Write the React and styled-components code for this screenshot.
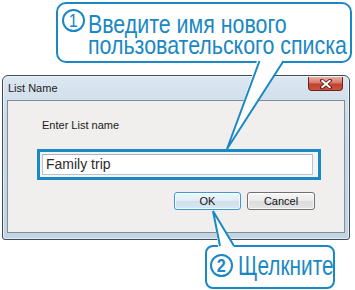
import React from 'react';
import styled, { createGlobalStyle } from 'styled-components';

const Global = createGlobalStyle`
  body {
    margin: 0;
    background: #fff;
    font-family: "Liberation Sans", Arial, sans-serif;
  }
`;

const blue = '#1a88c4';

const Page = styled.div`
  position: relative;
  width: 355px;
  height: 290px;
  box-sizing: border-box;
  padding: 75px 5px 0 2px;
  overflow: hidden;
`;

const Window = styled.div`
  height: 165px;
  box-sizing: border-box;
  display: flex;
  flex-direction: column;
  border: 1px solid #3d4b59;
  border-radius: 6px 6px 3px 3px;
  background: linear-gradient(180deg, #dbe7f1 0%, #c9d9e6 30%, #c3d4e2 100%);
  box-shadow: inset 0 0 0 1px rgba(255, 255, 255, 0.55);
`;

const TitleBar = styled.div`
  height: 24px;
  display: flex;
  align-items: flex-start;
  justify-content: space-between;
  padding: 0 6px 0 5px;
`;

const Title = styled.span`
  margin-top: 6px;
  font-size: 11px;
  color: #1b1b1b;
`;

const CloseButton = styled.div`
  width: 35px;
  height: 14px;
  margin-top: 1px;
  box-sizing: border-box;
  display: flex;
  align-items: center;
  justify-content: center;
  border: 1px solid #6a2219;
  border-top: none;
  border-radius: 0 0 4px 4px;
  background: linear-gradient(180deg, #e9b0a3 0%, #d8766a 45%, #c2412f 55%, #c7553f 100%);
`;

const Client = styled.div`
  flex: 1;
  margin: 0 4px 6px 4px;
  box-sizing: border-box;
  border: 1px solid #7e8d99;
  background: #f0efed;
  padding: 18px 23px 0 29px;
  display: flex;
  flex-direction: column;
`;

const Label = styled.div`
  margin-left: 5px;
  font-size: 11px;
  line-height: 13px;
  color: #1a1a1a;
`;

const Highlight = styled.div`
  margin-top: 17px;
  height: 31px;
  box-sizing: border-box;
  border: 3px solid ${blue};
  padding: 2px 5px 2px 2px;
  background: #f4f4f2;
`;

const TextBox = styled.div`
  height: 100%;
  box-sizing: border-box;
  border: 1px solid #b4c6d3;
  border-top-color: #a3b3c0;
  background: #fff;
  padding-left: 3px;
  font-size: 14px;
  line-height: 19px;
  color: #2c2c2c;
`;

const ButtonRow = styled.div`
  margin-top: 12px;
  padding-right: 6px;
  display: flex;
  justify-content: flex-end;
  gap: 6px;
`;

const Button = styled.div`
  width: ${(p) => p.$w}px;
  height: 18px;
  box-sizing: border-box;
  display: flex;
  align-items: center;
  justify-content: center;
  border: 1px solid ${(p) => (p.$default ? '#3c9bcd' : '#707070')};
  border-radius: 3px;
  background: ${(p) =>
    p.$default
      ? 'linear-gradient(180deg, #eef6fb 0%, #e1edf5 50%, #cfe0ec 51%, #d8e7f1 100%)'
      : 'linear-gradient(180deg, #f5f5f5 0%, #ebebeb 50%, #dcdcdc 51%, #e4e4e4 100%)'};
  box-shadow: inset 0 0 0 1px rgba(255, 255, 255, 0.8);
  font-size: 11px;
  color: #111;
`;

const Callout = styled.div`
  position: absolute;
  left: ${(p) => p.$x}px;
  top: ${(p) => p.$y}px;
  width: ${(p) => p.$w}px;
  height: ${(p) => p.$h}px;
  box-sizing: border-box;
  border: 2px solid ${blue};
  border-radius: ${(p) => p.$r}px;
  background: #fff;
  padding: ${(p) => p.$pad};
  display: flex;
  align-items: flex-start;
  gap: ${(p) => p.$gap}px;
  z-index: 2;
`;

const Circle = styled.div`
  flex: none;
  width: ${(p) => p.$size}px;
  height: ${(p) => p.$size}px;
  box-sizing: border-box;
  margin-top: ${(p) => p.$top}px;
  border: 2px solid ${blue};
  border-radius: 50%;
  display: flex;
  align-items: center;
  justify-content: center;
  font-size: 19px;
  font-weight: ${(p) => (p.$bold ? 700 : 400)};
  color: ${blue};
  line-height: 1;
`;

const Digit = styled.span`
  display: inline-block;
  transform: scaleX(0.85);
`;

const CalloutText = styled.div`
  flex: 1;
  min-width: 0;
  margin-top: ${(p) => p.$top}px;
  font-size: ${(p) => p.$size}px;
  line-height: ${(p) => p.$lh}px;
  color: ${blue};
  white-space: nowrap;
  transform: scaleX(${(p) => p.$sx});
  transform-origin: left top;
`;

const Tails = styled.svg`
  position: absolute;
  left: 0;
  top: 0;
  z-index: 3;
  pointer-events: none;
`;

export default function App() {
  return (
    <>
      <Global />
      <Page>
        <Window>
          <TitleBar>
            <Title>List Name</Title>
            <CloseButton>
              <svg width="12" height="10" viewBox="0 0 12 10">
                <path d="M2 1.5 L10 8.5 M10 1.5 L2 8.5" stroke="#5a1c14" strokeWidth="3.6" strokeLinecap="square" />
                <path d="M2.3 1.8 L9.7 8.2 M9.7 1.8 L2.3 8.2" stroke="#fff" strokeWidth="2" strokeLinecap="square" />
              </svg>
            </CloseButton>
          </TitleBar>
          <Client>
            <Label>Enter List name</Label>
            <Highlight>
              <TextBox>Family trip</TextBox>
            </Highlight>
            <ButtonRow>
              <Button $default $w={67}>OK</Button>
              <Button $w={68}>Cancel</Button>
            </ButtonRow>
          </Client>
        </Window>

        <Callout $x={56} $y={2} $w={296} $h={61} $r={10} $pad="5px 0 0 4px" $gap={3}>
          <Circle $size={23} $top={0}><Digit>1</Digit></Circle>
          <CalloutText $size={25} $lh={21} $top={5} $sx={0.855}>
            Введите имя нового
            <br />
            пользовательского списка
          </CalloutText>
        </Callout>

        <Callout $x={205} $y={245} $w={130} $h={44} $r={8} $pad="0 0 0 3px" $gap={5}>
          <Circle $size={23} $top={7} $bold><Digit>2</Digit></Circle>
          <CalloutText $size={27} $lh={28} $top={5} $sx={0.77}>Щелкните</CalloutText>
        </Callout>

        <Tails width="355" height="290" viewBox="0 0 355 290">
          <polygon points="258,58 227,150 285,58" fill="#fff" />
          <polyline points="259.5,61 227,149 283.5,61" fill="none" stroke={blue} strokeWidth="2" />
          <polygon points="218.5,249 213,211 235.5,249" fill="#fff" />
          <polyline points="220,246 213,211 234,246" fill="none" stroke={blue} strokeWidth="2" />
        </Tails>
      </Page>
    </>
  );
}
